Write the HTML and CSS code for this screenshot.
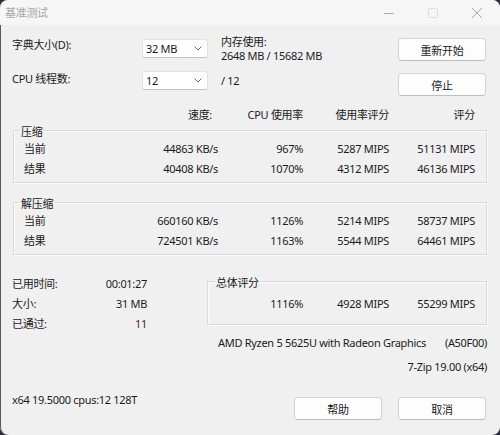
FILE: index.html
```html
<!DOCTYPE html>
<html lang="zh-CN">
<head>
<meta charset="utf-8">
<title>基准测试</title>
<link rel="stylesheet" href="styles.css">
</head>
<body>
<div class="window">
  <div class="titlebar">
    <span class="title">基准测试</span>
    <div class="controls">
      <span class="ctl"><svg width="12" height="12" viewBox="0 0 12 12"><line x1="1" y1="6.5" x2="11" y2="6.5" stroke="#a9a9a9" stroke-width="1"/></svg></span>
      <span class="ctl"><svg width="12" height="12" viewBox="0 0 12 12"><rect x="1.5" y="1.5" width="9" height="9" rx="1" fill="none" stroke="#dcdcdc" stroke-width="1"/></svg></span>
      <span class="ctl"><svg width="12" height="12" viewBox="0 0 12 12"><path d="M1 1 L11 11 M11 1 L1 11" stroke="#a9a9a9" stroke-width="1"/></svg></span>
    </div>
  </div>
  <div class="content">
    <div class="settings">
      <div class="lbl lbl1">字典大小(D):</div>
      <div class="combo combo1"><span>32 MB</span><svg width="8" height="5" viewBox="0 0 8 5"><path d="M0.5 0.5 L4 4 L7.5 0.5" fill="none" stroke="#6a6a6a" stroke-width="1"/></svg></div>
      <div class="mem"><div>内存使用:</div><div>2648 MB / 15682 MB</div></div>
      <button class="btn btn1">重新开始</button>
      <div class="lbl lbl2">CPU 线程数:</div>
      <div class="combo combo2"><span>12</span><svg width="8" height="5" viewBox="0 0 8 5"><path d="M0.5 0.5 L4 4 L7.5 0.5" fill="none" stroke="#6a6a6a" stroke-width="1"/></svg></div>
      <div class="threads">/ 12</div>
      <button class="btn btn2">停止</button>
    </div>

    <div class="thead cols">
      <span></span>
      <span class="num speed-h">速度:</span>
      <span class="num">CPU 使用率</span>
      <span class="num">使用率评分</span>
      <span class="num">评分</span>
    </div>

    <div class="group g-comp">
      <div class="legend">压缩</div>
      <div class="row cols"><span>当前</span><span class="num">44863 KB/s</span><span class="num">967%</span><span class="num">5287 MIPS</span><span class="num">51131 MIPS</span></div>
      <div class="row cols"><span>结果</span><span class="num">40408 KB/s</span><span class="num">1070%</span><span class="num">4312 MIPS</span><span class="num">46136 MIPS</span></div>
    </div>

    <div class="group g-decomp">
      <div class="legend">解压缩</div>
      <div class="row cols"><span>当前</span><span class="num">660160 KB/s</span><span class="num">1126%</span><span class="num">5214 MIPS</span><span class="num">58737 MIPS</span></div>
      <div class="row cols"><span>结果</span><span class="num">724501 KB/s</span><span class="num">1163%</span><span class="num">5544 MIPS</span><span class="num">64461 MIPS</span></div>
    </div>

    <div class="bottom">
      <div class="stats">
        <span>已用时间:</span><span class="num">00:01:27</span>
        <span>大小:</span><span class="num">31 MB</span>
        <span>已通过:</span><span class="num passes">11</span>
      </div>
      <div class="right">
        <div class="group g-total">
          <div class="legend">总体评分</div>
          <div class="row tcols"><span class="num">1116%</span><span class="num">4928 MIPS</span><span class="num">55299 MIPS</span></div>
        </div>
        <div class="cpu-line"><span>AMD Ryzen 5 5625U with Radeon Graphics</span><span>(A50F00)</span></div>
        <div class="ver">7-Zip 19.00 (x64)</div>
      </div>
    </div>

    <div class="footer">
      <span class="sysinfo">x64 19.5000 cpus:12 128T</span>
      <div class="footer-btns">
        <button class="btn">帮助</button>
        <button class="btn">取消</button>
      </div>
    </div>
  </div>
</div>
</body>
</html>
```

FILE: styles.css
```css
* { box-sizing: border-box; }
html, body { margin: 0; padding: 0; }
body {
  background: #2a2d3a;
  width: 500px;
  height: 435px;
  overflow: hidden;
  font-family: "Noto Sans", "Noto Sans CJK SC", sans-serif;
  font-size: 11px;
  letter-spacing: -0.3px;
  color: #1b1b1b;
}
.window {
  width: 500px;
  height: 435px;
  background: #f0f0f0;
  border-radius: 8px;
  overflow: hidden;
  box-shadow: inset 1px 0 0 #5a5a5a;
}
.titlebar {
  height: 25px;
  background: #f6f6f6;
  display: flex;
  align-items: center;
  justify-content: space-between;
}
.title {
  padding-left: 5px;
  color: #a6a6a6;
  font-size: 11px;
  line-height: 25px;
}
.controls { display: flex; padding-right: 1px; height: 25px; }
.ctl {
  width: 44px;
  height: 25px;
  display: flex;
  align-items: center;
  justify-content: center;
}
.content { padding: 11px 14px 0 12px; }

.settings {
  display: grid;
  grid-template-columns: 130px 66px 13px 177px 88px;
  grid-template-rows: 25px 35px;
  align-items: start;
}
.lbl { grid-column: 1; line-height: 17px; }
.lbl2 { margin-top: 9px; }
.combo {
  grid-column: 2;
  height: 19px;
  background: #fff;
  border: 1px solid #e2e2e2;
  border-bottom-color: #c4c4c4;
  border-radius: 3px;
  display: flex;
  align-items: center;
  justify-content: space-between;
  padding: 0 5px 0 3px;
}
.combo1 { margin-top: 3px; }
.combo2 { margin-top: 10px; }
.mem { grid-column: 4; grid-row: 1; line-height: 14px; margin-top: -1px; }
.threads { grid-column: 4; grid-row: 2; line-height: 17px; margin-top: 11px; }
.btn {
  font: inherit;
  letter-spacing: inherit;
  color: #1b1b1b;
  width: 88px;
  height: 23px;
  background: #fdfdfd;
  border: 1px solid #d3d3d3;
  border-bottom-color: #bcbcbc;
  border-radius: 4px;
  padding: 0;
}
.btn1 { grid-column: 5; grid-row: 1; margin-top: 2px; }
.btn2 { grid-column: 5; grid-row: 2; margin-top: 12px; }

.cols {
  display: grid;
  grid-template-columns: 100px 94px 85px 86px 86px;
}
.num { text-align: right; }
.thead { margin-top: 9px; line-height: 20px; padding-left: 12px; }
.speed-h { padding-right: 6px; }

.group {
  border: 1px solid #d9d9d9;
  box-shadow: inset 1px 1px 0 #fbfbfb, 1px 1px 0 #fbfbfb;
  margin: 0 -1px 0 1px;
}
.legend {
  width: fit-content;
  margin: -6px 0 0 6px;
  padding: 0 1px;
  background: #f0f0f0;
  line-height: 14px;
}
.row { line-height: 20px; }
.g-comp, .g-decomp { padding: 0 0 3px 10px; }
.g-comp .legend, .g-decomp .legend { margin-left: -4px; }
.g-comp { margin-top: 5px; }
.g-decomp { margin-top: 19px; }

.bottom { display: flex; }
.stats {
  flex: 0 0 195px;
  margin-top: 19px;
  display: grid;
  grid-template-columns: 80px 55px;
  grid-auto-rows: 20px;
  line-height: 20px;
  align-content: start;
}
.passes { color: #4a1d36; }
.right { flex: 1; margin-right: -1px; }
.g-total { margin: 26px 0 0 0; padding: 0 0 10px 0; }
.g-total .legend { margin-left: 7px; }
.tcols {
  display: grid;
  grid-template-columns: 95px 86px 86px;
  margin-top: 4px;
}
.cpu-line {
  margin-top: 8px;
  line-height: 20px;
  padding-left: 11px;
  display: flex;
  justify-content: space-between;
}
.ver { margin-top: 4px; line-height: 20px; text-align: right; }

.footer {
  margin-top: 13px;
  display: flex;
  justify-content: space-between;
  align-items: flex-start;
}
.sysinfo { line-height: 20px; }
.footer-btns { display: flex; gap: 16px; margin-top: 7px; }
```
